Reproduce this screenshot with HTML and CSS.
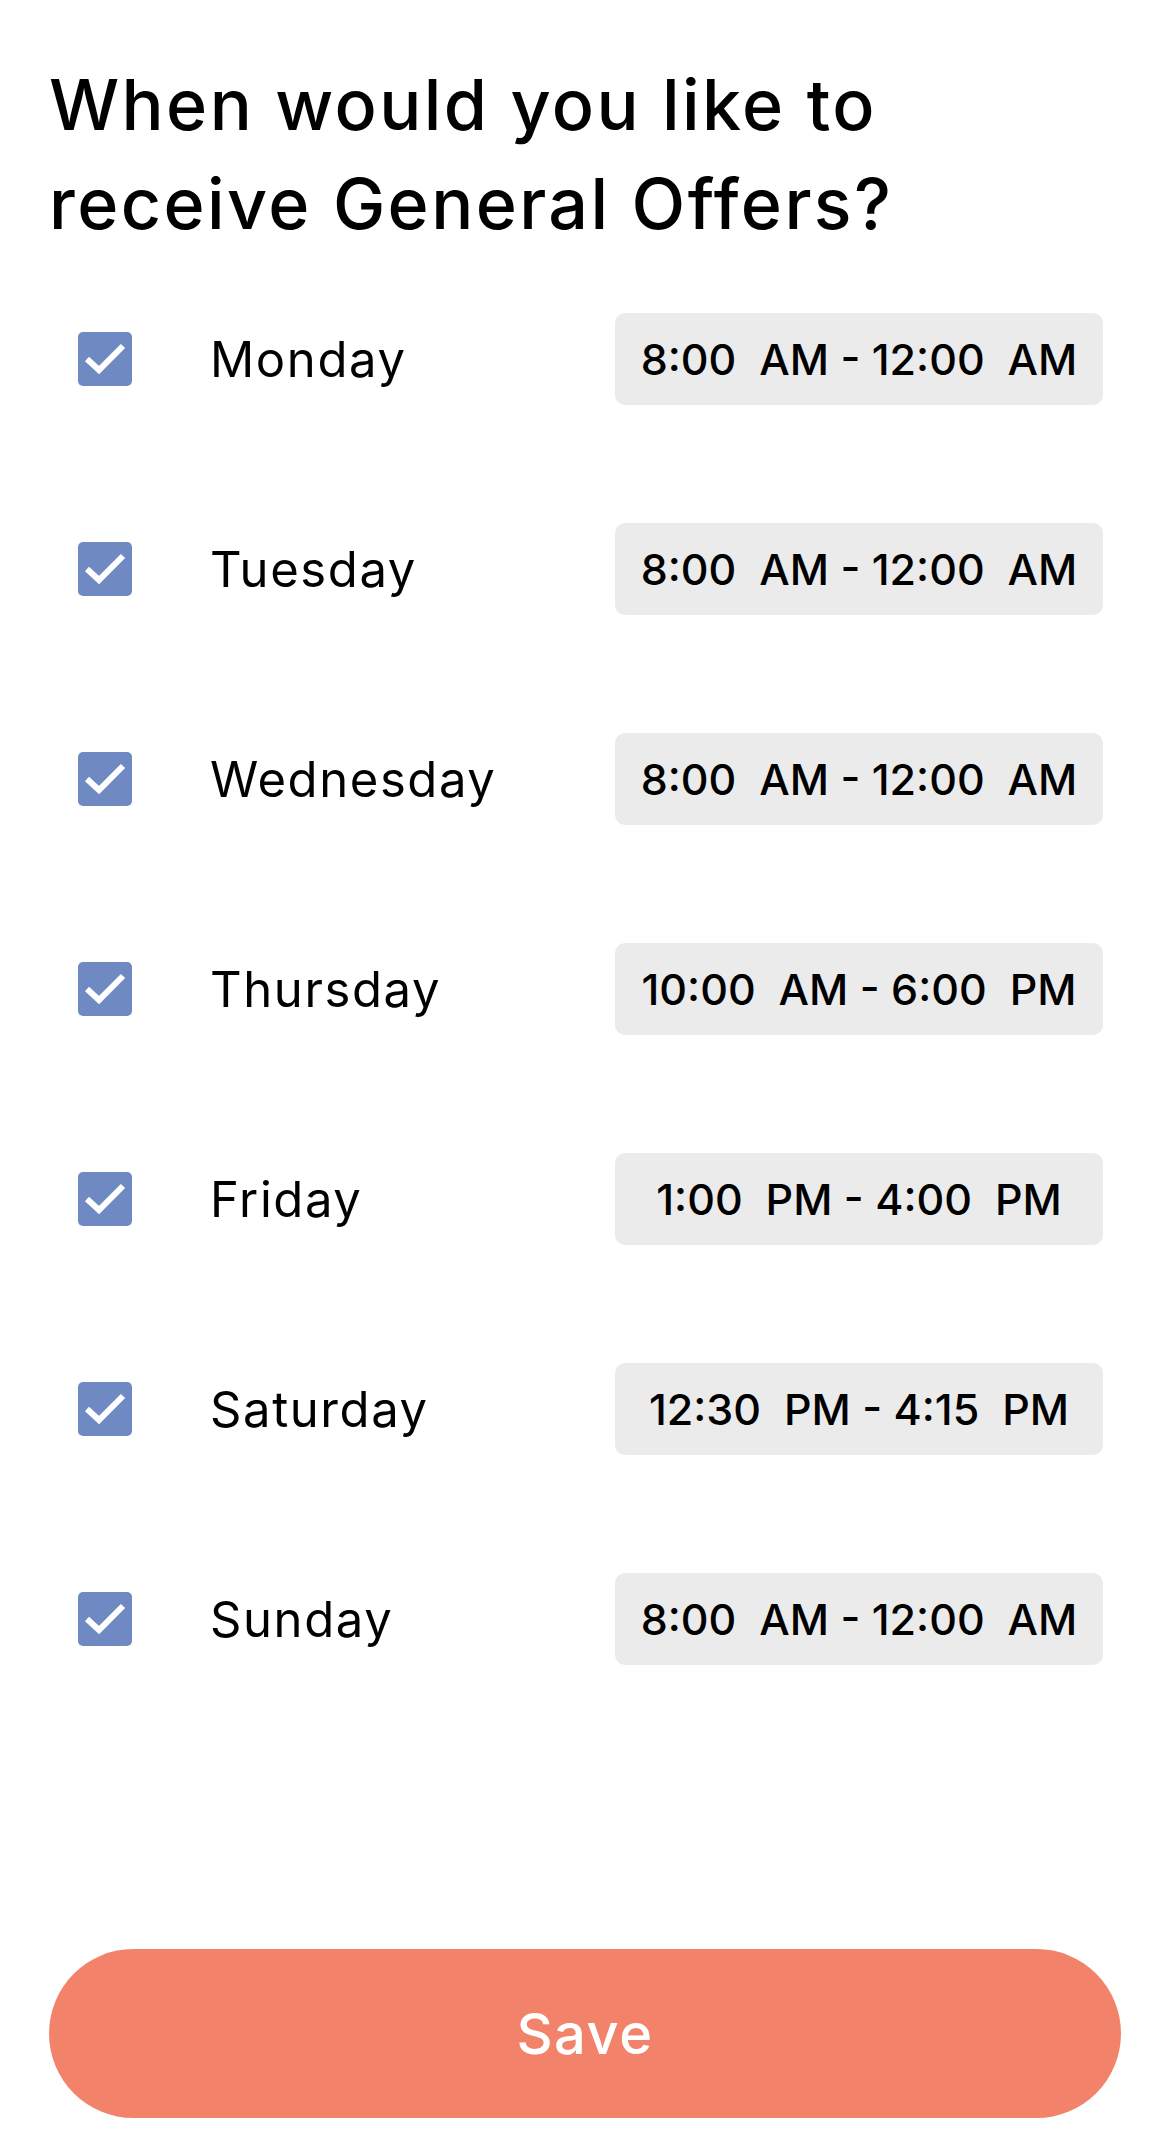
FILE: index.html
```html
<!DOCTYPE html>
<html lang="en">
<head>
    <meta charset="UTF-8">
    <meta name="viewport" content="width=device-width, initial-scale=1.0">
    <title>General Offers</title>
    <link rel="stylesheet" href="styles.css">
</head>
<body>
    <div class="page">
        <h1 class="title">When would you like to receive General Offers?</h1>

        <ul class="days">
            <li class="day">
                <span class="check"><svg viewBox="0 0 54 54"><polyline points="9,27 21,38 45,14"/></svg></span>
                <span class="day-name">Monday</span>
                <span class="time">8:00&nbsp; AM - 12:00&nbsp; AM</span>
            </li>
            <li class="day">
                <span class="check"><svg viewBox="0 0 54 54"><polyline points="9,27 21,38 45,14"/></svg></span>
                <span class="day-name">Tuesday</span>
                <span class="time">8:00&nbsp; AM - 12:00&nbsp; AM</span>
            </li>
            <li class="day">
                <span class="check"><svg viewBox="0 0 54 54"><polyline points="9,27 21,38 45,14"/></svg></span>
                <span class="day-name">Wednesday</span>
                <span class="time">8:00&nbsp; AM - 12:00&nbsp; AM</span>
            </li>
            <li class="day">
                <span class="check"><svg viewBox="0 0 54 54"><polyline points="9,27 21,38 45,14"/></svg></span>
                <span class="day-name">Thursday</span>
                <span class="time">10:00&nbsp; AM - 6:00&nbsp; PM</span>
            </li>
            <li class="day">
                <span class="check"><svg viewBox="0 0 54 54"><polyline points="9,27 21,38 45,14"/></svg></span>
                <span class="day-name">Friday</span>
                <span class="time">1:00&nbsp; PM - 4:00&nbsp; PM</span>
            </li>
            <li class="day">
                <span class="check"><svg viewBox="0 0 54 54"><polyline points="9,27 21,38 45,14"/></svg></span>
                <span class="day-name">Saturday</span>
                <span class="time">12:30&nbsp; PM - 4:15&nbsp; PM</span>
            </li>
            <li class="day">
                <span class="check"><svg viewBox="0 0 54 54"><polyline points="9,27 21,38 45,14"/></svg></span>
                <span class="day-name">Sunday</span>
                <span class="time">8:00&nbsp; AM - 12:00&nbsp; AM</span>
            </li>
        </ul>

        <button class="save" type="button">Save</button>
    </div>
</body>
</html>
```

FILE: styles.css
```css
* {
    margin: 0;
    padding: 0;
    box-sizing: border-box;
}

body {
    font-family: 'Inter', 'Noto Sans', sans-serif;
    background: #ffffff;
    color: #000;
}

.page {
    min-height: 2136px;
    padding: 55px 49px 18px 49px;
    display: flex;
    flex-direction: column;
}

.title {
    font-size: 70px;
    font-weight: 500;
    line-height: 99px;
    letter-spacing: 2.4px;
    max-width: 940px;
}

.days {
    list-style: none;
    margin-top: 60px;
    display: flex;
    flex-direction: column;
    gap: 118px;
}

.day {
    display: flex;
    align-items: center;
    height: 92px;
    padding-left: 29px;
    padding-right: 18px;
}

.check {
    width: 54px;
    height: 54px;
    border-radius: 5px;
    background: #6f8ac3;
    display: flex;
}

.check svg {
    width: 54px;
    height: 54px;
    fill: none;
    stroke: #fff;
    stroke-width: 6;
}

.day-name {
    margin-left: 78px;
    font-size: 49px;
    font-weight: 400;
    letter-spacing: 1.6px;
}

.time {
    margin-left: auto;
    width: 488px;
    height: 92px;
    border-radius: 10px;
    background: #ebebeb;
    display: flex;
    align-items: center;
    justify-content: center;
    font-size: 43px;
    font-weight: 500;
    white-space: nowrap;
}

.save {
    margin-top: auto;
    height: 169px;
    border: none;
    border-radius: 85px;
    background: #f2836a;
    color: #fff;
    font-family: inherit;
    font-size: 56px;
    font-weight: 500;
    letter-spacing: 1.5px;
}
```
